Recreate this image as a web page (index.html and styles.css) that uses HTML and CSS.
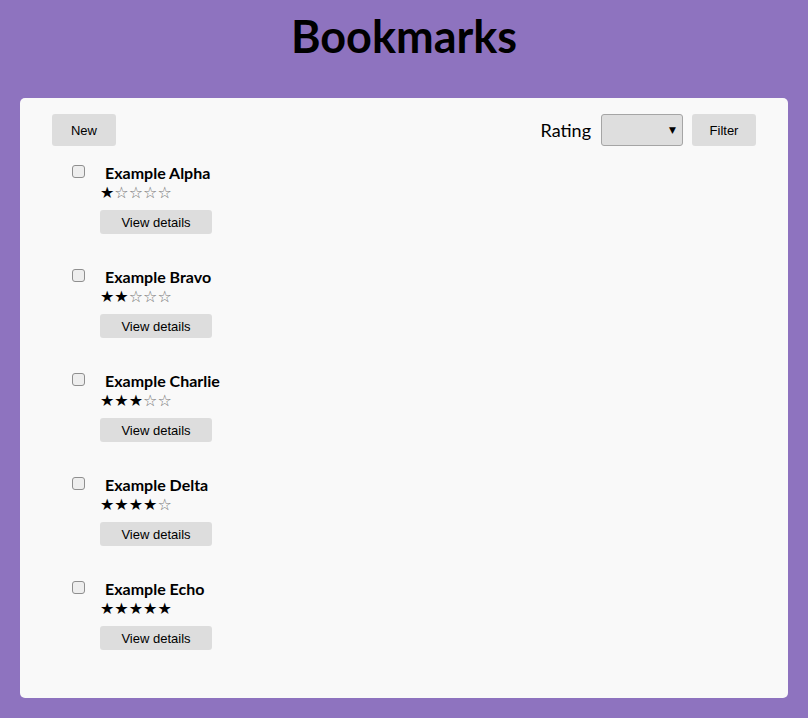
FILE: index.html
```html
<!DOCTYPE html>
<html>
<head>
<meta charset="utf-8">
<link rel="stylesheet" href="styles.css">
</head>
<body>
<header class="top"><h1 class="title">Bookmarks</h1></header>
<main class="card">
  <div class="toolbar">
    <button class="btn btn-new">New</button>
    <div class="filter">
      <span class="label">Rating</span>
      <div class="select"><span class="caret">▼</span></div>
      <button class="btn btn-filter">Filter</button>
    </div>
  </div>
  <ul class="list">
    <li class="item">
      <span class="check"></span>
      <div class="body">
        <div class="name">Example Alpha</div>
        <div class="stars"><span class="on">★</span><span class="off">☆☆☆☆</span></div>
        <button class="btn btn-view">View details</button>
      </div>
    </li>
    <li class="item">
      <span class="check"></span>
      <div class="body">
        <div class="name">Example Bravo</div>
        <div class="stars"><span class="on">★★</span><span class="off">☆☆☆</span></div>
        <button class="btn btn-view">View details</button>
      </div>
    </li>
    <li class="item">
      <span class="check"></span>
      <div class="body">
        <div class="name">Example Charlie</div>
        <div class="stars"><span class="on">★★★</span><span class="off">☆☆</span></div>
        <button class="btn btn-view">View details</button>
      </div>
    </li>
    <li class="item">
      <span class="check"></span>
      <div class="body">
        <div class="name">Example Delta</div>
        <div class="stars"><span class="on">★★★★</span><span class="off">☆</span></div>
        <button class="btn btn-view">View details</button>
      </div>
    </li>
    <li class="item">
      <span class="check"></span>
      <div class="body">
        <div class="name">Example Echo</div>
        <div class="stars"><span class="on">★★★★★</span></div>
        <button class="btn btn-view">View details</button>
      </div>
    </li>
  </ul>
</main>
</body>
</html>
```
FILE: styles.css
```css
* { box-sizing: border-box; }
html, body { margin: 0; padding: 0; }
body {
  background: #8e73bf;
  font-family: Lato, "Liberation Sans", sans-serif;
  color: #000;
  width: 808px;
  height: 718px;
  padding: 0 20px;
}
.top {
  height: 98px;
  display: flex;
  align-items: flex-start;
  justify-content: center;
  padding-top: 14px;
}
.title {
  margin: 0;
  font-size: 45px;
  font-weight: 700;
  line-height: 1;
}
.card {
  background: #f9f9f9;
  border-radius: 5px;
  height: 600px;
  padding: 16px 32px 0 32px;
}
.toolbar {
  display: flex;
  justify-content: space-between;
  align-items: center;
  height: 32px;
}
.btn {
  font-family: "Liberation Sans", Arial, sans-serif;
  font-size: 13px;
  color: #000;
  background: #dddddd;
  border: none;
  border-radius: 3px;
  padding: 0;
  display: flex;
  align-items: center;
  justify-content: center;
}
.btn-new, .btn-filter { width: 64px; height: 32px; }
.filter { display: flex; align-items: center; }
.label { font-size: 18px; margin-right: 10px; }
.select {
  width: 82px;
  height: 32px;
  border: 1px solid #a5a5a5;
  border-radius: 3px;
  background: #dedede;
  display: flex;
  align-items: center;
  justify-content: flex-end;
  padding-right: 6px;
  margin-right: 9px;
}
.caret { font-size: 9px; font-family: "DejaVu Sans", sans-serif; }
.list { list-style: none; margin: 0; padding: 19px 0 0 20px; }
.item { display: flex; height: 104px; }
.check {
  width: 13px;
  height: 13px;
  border: 1px solid #8f8f8f;
  border-radius: 3px;
  background: #eeeeee;
  margin-top: 0;
  flex: none;
}
.body { margin-left: 15px; }
.name { font-weight: 700; font-size: 16px; line-height: 16px; height: 18px; padding-left: 5px; }
.stars { font-family: "DejaVu Sans", sans-serif; font-size: 16px; line-height: 20px; height: 20px; }
.stars .off { color: #777; }
.btn-view { width: 112px; height: 24px; margin-top: 7px; }
```
